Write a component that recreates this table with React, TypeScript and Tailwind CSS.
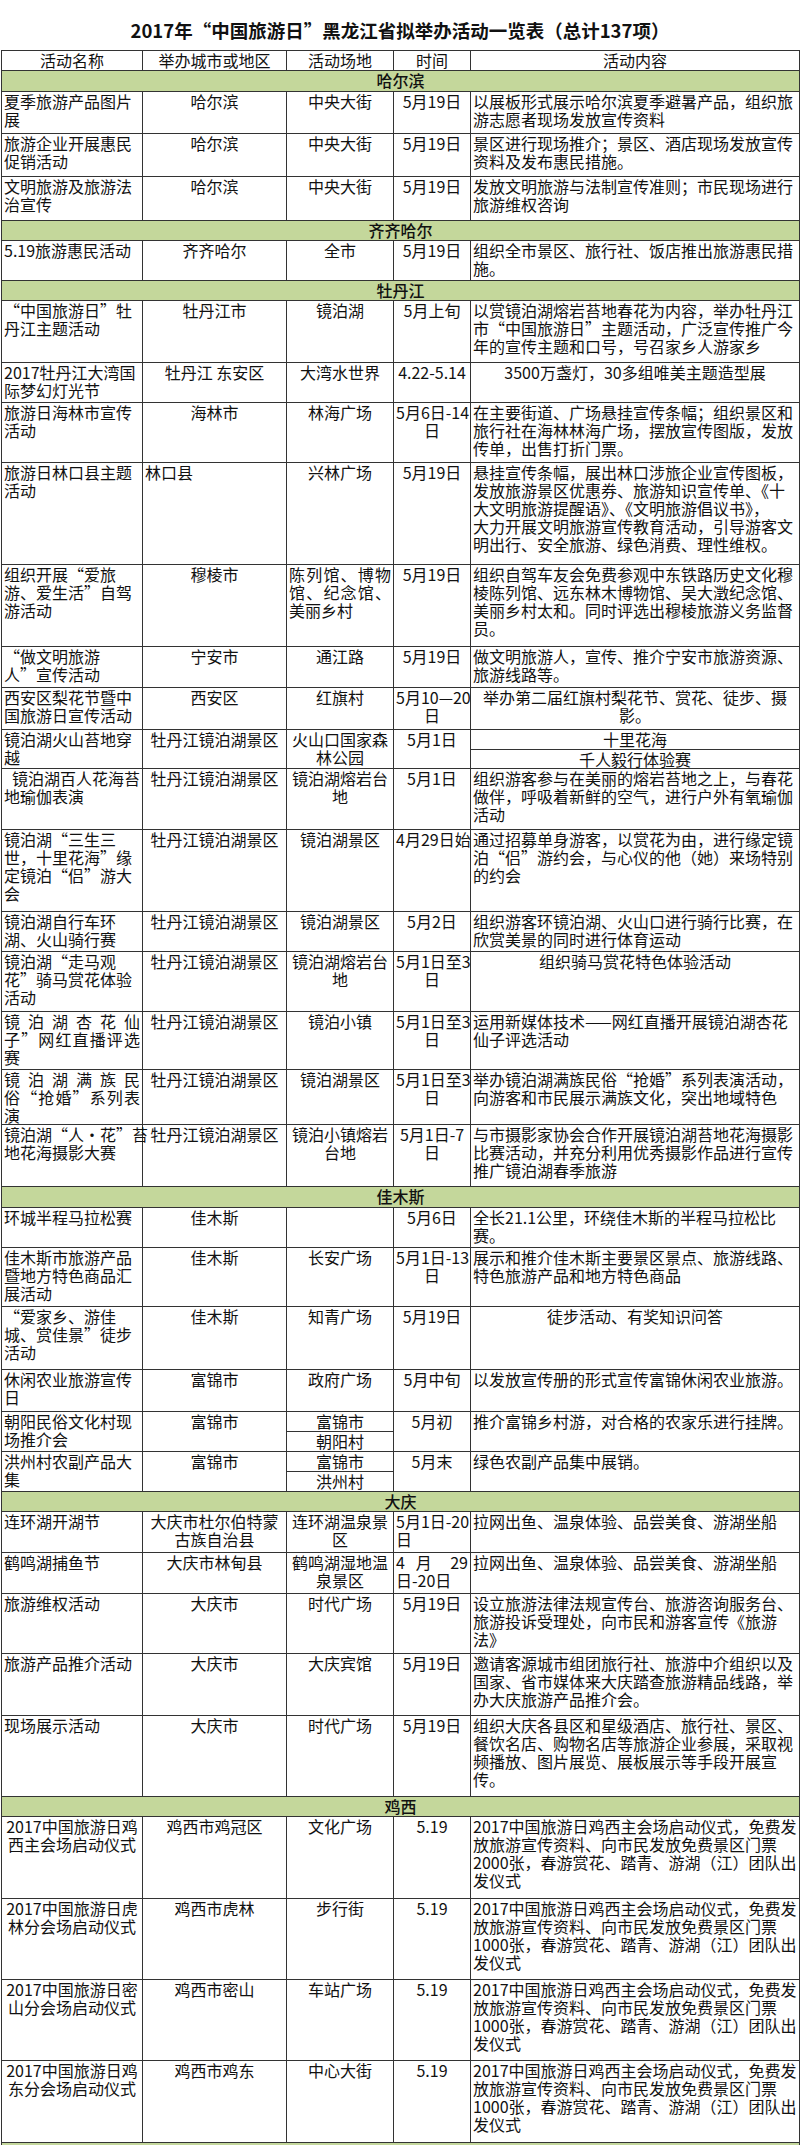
import React from 'react'

type Align = 'l' | 'c'
type CellSpec = string | { t: string; a?: Align; rs?: number }
type Row = { s: string; h: string } | { h: string; c: CellSpec[] }

// column default alignment: 名称 / 城市 / 场地 / 时间 / 内容
const defAlign: Align[] = ['l', 'c', 'c', 'c', 'l']

const rows: Row[] = [
  { s: '哈尔滨', h: 'h-[21px]' },
  { h: 'h-[42px]', c: ['夏季旅游产品图片|展', '哈尔滨', '中央大街', '5月19日', '以展板形式展示哈尔滨夏季避暑产品，组织旅|游志愿者现场发放宣传资料'] },
  { h: 'h-[43px]', c: ['旅游企业开展惠民|促销活动', '哈尔滨', '中央大街', '5月19日', '景区进行现场推介；景区、酒店现场发放宣传|资料及发布惠民措施。'] },
  { h: 'h-[44px]', c: ['文明旅游及旅游法|治宣传', '哈尔滨', '中央大街', '5月19日', '发放文明旅游与法制宣传准则；市民现场进行|旅游维权咨询'] },
  { s: '齐齐哈尔', h: 'h-[20px]' },
  { h: 'h-[40px]', c: ['5.19旅游惠民活动', '齐齐哈尔', '全市', '5月19日', '组织全市景区、旅行社、饭店推出旅游惠民措|施。'] },
  { s: '牡丹江', h: 'h-[20px]' },
  { h: 'h-[62px]', c: ['“中国旅游日”牡|丹江主题活动', '牡丹江市', '镜泊湖', '5月上旬', '以赏镜泊湖熔岩苔地春花为内容，举办牡丹江|市“中国旅游日”主题活动，广泛宣传推广今|年的宣传主题和口号，号召家乡人游家乡'] },
  { h: 'h-[40px]', c: ['2017牡丹江大湾国|际梦幻灯光节', '牡丹江 东安区', '大湾水世界', '4.22-5.14', { t: '3500万盏灯，30多组唯美主题造型展', a: 'c' }] },
  { h: 'h-[60px]', c: ['旅游日海林市宣传|活动', '海林市', '林海广场', '5月6日-14|日', '在主要街道、广场悬挂宣传条幅；组织景区和|旅行社在海林林海广场，摆放宣传图版，发放|传单，出售打折门票。'] },
  { h: 'h-[102px]', c: ['旅游日林口县主题|活动', { t: '林口县', a: 'l' }, '兴林广场', '5月19日', '悬挂宣传条幅，展出林口涉旅企业宣传图板，|发放旅游景区优惠券、旅游知识宣传单、《十|大文明旅游提醒语》、《文明旅游倡议书》，|大力开展文明旅游宣传教育活动，引导游客文|明出行、安全旅游、绿色消费、理性维权。'] },
  { h: 'h-[82px]', c: ['组织开展“爱旅|游、爱生活”自驾|游活动', '穆棱市', { t: '~陈列馆、博物|~馆、纪念馆、|美丽乡村', a: 'l' }, '5月19日', '组织自驾车友会免费参观中东铁路历史文化穆|棱陈列馆、远东林木博物馆、吴大澂纪念馆、|美丽乡村太和。同时评选出穆棱旅游义务监督|员。'] },
  { h: 'h-[41px]', c: ['“做文明旅游|人”宣传活动', '宁安市', '通江路', '5月19日', '做文明旅游人，宣传、推介宁安市旅游资源、|旅游线路等。'] },
  { h: 'h-[42px]', c: ['西安区梨花节暨中|国旅游日宣传活动', '西安区', '红旗村', '5月10—20|日', { t: '举办第二届红旗村梨花节、赏花、徒步、摄|影。', a: 'c' }] },
  { h: 'h-[20px]', c: [{ t: '镜泊湖火山苔地穿|越', rs: 2 }, { t: '牡丹江镜泊湖景区', rs: 2 }, { t: '火山口国家森|林公园', rs: 2 }, { t: '5月1日', rs: 2 }, { t: '十里花海', a: 'c' }] },
  { h: 'h-[19px]', c: [{ t: '千人毅行体验赛', a: 'c' }] },
  { h: 'h-[61px]', c: ['^镜泊湖百人花海苔|地瑜伽表演', '牡丹江镜泊湖景区', '镜泊湖熔岩台|地', '5月1日', '组织游客参与在美丽的熔岩苔地之上，与春花|做伴，呼吸着新鲜的空气，进行户外有氧瑜伽|活动'] },
  { h: 'h-[82px]', c: ['镜泊湖“三生三|世，十里花海”缘|定镜泊“侣”游大|会', '牡丹江镜泊湖景区', '镜泊湖景区', '4月29日始', '通过招募单身游客，以赏花为由，进行缘定镜|泊“侣”游约会，与心仪的他（她）来场特别|的约会'] },
  { h: 'h-[40px]', c: ['镜泊湖自行车环|湖、火山骑行赛', '牡丹江镜泊湖景区', '镜泊湖景区', '5月2日', '组织游客环镜泊湖、火山口进行骑行比赛，在|欣赏美景的同时进行体育运动'] },
  { h: 'h-[60px]', c: ['镜泊湖“走马观|花”骑马赏花体验|活动', '牡丹江镜泊湖景区', '镜泊湖熔岩台|地', '5月1日至3|日', { t: '组织骑马赏花特色体验活动', a: 'c' }] },
  { h: 'h-[58px]', c: ['~镜泊湖杏花仙|~子”网红直播评选|赛', '牡丹江镜泊湖景区', '镜泊小镇', '5月1日至3|日', '运用新媒体技术——网红直播开展镜泊湖杏花|仙子评选活动'] },
  { h: 'h-[55px]', c: ['~镜泊湖满族民|~俗“抢婚”系列表|演', '牡丹江镜泊湖景区', '镜泊湖景区', '5月1日至3|日', '举办镜泊湖满族民俗“抢婚”系列表演活动，|向游客和市民展示满族文化，突出地域特色'] },
  { h: 'h-[62px]', c: ['镜泊湖“人•花”苔|地花海摄影大赛', '牡丹江镜泊湖景区', '镜泊小镇熔岩|台地', '5月1日-7|日', '与市摄影家协会合作开展镜泊湖苔地花海摄影|比赛活动，并充分利用优秀摄影作品进行宣传|推广镜泊湖春季旅游'] },
  { s: '佳木斯', h: 'h-[21px]' },
  { h: 'h-[40px]', c: ['环城半程马拉松赛', '佳木斯', '', '5月6日', '全长21.1公里，环绕佳木斯的半程马拉松比|赛。'] },
  { h: 'h-[59px]', c: ['佳木斯市旅游产品|暨地方特色商品汇|展活动', '佳木斯', '长安广场', '5月1日-13|日', '展示和推介佳木斯主要景区景点、旅游线路、|特色旅游产品和地方特色商品'] },
  { h: 'h-[63px]', c: ['“爱家乡、游佳|城、赏佳景”徒步|活动', '佳木斯', '知青广场', '5月19日', { t: '徒步活动、有奖知识问答', a: 'c' }] },
  { h: 'h-[42px]', c: ['休闲农业旅游宣传|日', '富锦市', '政府广场', '5月中旬', '以发放宣传册的形式宣传富锦休闲农业旅游。'] },
  { h: 'h-[20px]', c: [{ t: '朝阳民俗文化村现|场推介会', rs: 2 }, { t: '富锦市', rs: 2 }, '富锦市', { t: '5月初', rs: 2 }, { t: '推介富锦乡村游，对合格的农家乐进行挂牌。', rs: 2 }] },
  { h: 'h-[20px]', c: [{ t: '朝阳村', a: 'c' }] },
  { h: 'h-[20px]', c: [{ t: '洪州村农副产品大|集', rs: 2 }, { t: '富锦市', rs: 2 }, '富锦市', { t: '5月末', rs: 2 }, { t: '绿色农副产品集中展销。', rs: 2 }] },
  { h: 'h-[20px]', c: [{ t: '洪州村', a: 'c' }] },
  { s: '大庆', h: 'h-[20px]' },
  { h: 'h-[41px]', c: ['连环湖开湖节', '大庆市杜尔伯特蒙|古族自治县', '连环湖温泉景|区', { t: '5月1日-20|日', a: 'l' }, '拉网出鱼、温泉体验、品尝美食、游湖坐船'] },
  { h: 'h-[41px]', c: ['鹤鸣湖捕鱼节', '大庆市林甸县', '鹤鸣湖湿地温|泉景区', { t: '~4 月 29|日-20日', a: 'l' }, '拉网出鱼、温泉体验、品尝美食、游湖坐船'] },
  { h: 'h-[60px]', c: ['旅游维权活动', '大庆市', '时代广场', '5月19日', '设立旅游法律法规宣传台、旅游咨询服务台、|旅游投诉受理处，向市民和游客宣传《旅游|法》'] },
  { h: 'h-[62px]', c: ['旅游产品推介活动', '大庆市', '大庆宾馆', '5月19日', '邀请客源城市组团旅行社、旅游中介组织以及|国家、省市媒体来大庆踏查旅游精品线路，举|办大庆旅游产品推介会。'] },
  { h: 'h-[81px]', c: ['现场展示活动', '大庆市', '时代广场', '5月19日', '组织大庆各县区和星级酒店、旅行社、景区、|餐饮名店、购物名店等旅游企业参展，采取视|频播放、图片展览、展板展示等手段开展宣|传。'] },
  { s: '鸡西', h: 'h-[20px]' },
  { h: 'h-[82px]', c: [{ t: '2017中国旅游日鸡|西主会场启动仪式', a: 'c' }, '鸡西市鸡冠区', '文化广场', '5.19', '2017中国旅游日鸡西主会场启动仪式，免费发|放旅游宣传资料、向市民发放免费景区门票|2000张，春游赏花、踏青、游湖（江）团队出|发仪式'] },
  { h: 'h-[81px]', c: [{ t: '2017中国旅游日虎|林分会场启动仪式', a: 'c' }, '鸡西市虎林', '步行街', '5.19', '2017中国旅游日鸡西主会场启动仪式，免费发|放旅游宣传资料、向市民发放免费景区门票|1000张，春游赏花、踏青、游湖（江）团队出|发仪式'] },
  { h: 'h-[81px]', c: [{ t: '2017中国旅游日密|山分会场启动仪式', a: 'c' }, '鸡西市密山', '车站广场', '5.19', '2017中国旅游日鸡西主会场启动仪式，免费发|放旅游宣传资料、向市民发放免费景区门票|1000张，春游赏花、踏青、游湖（江）团队出|发仪式'] },
  { h: 'h-[82px]', c: [{ t: '2017中国旅游日鸡|东分会场启动仪式', a: 'c' }, '鸡西市鸡东', '中心大街', '5.19', '2017中国旅游日鸡西主会场启动仪式，免费发|放旅游宣传资料、向市民发放免费景区门票|1000张，春游赏花、踏青、游湖（江）团队出|发仪式'] },
  { s: '', h: 'h-[20px]' },
]

const headers = ['活动名称', '举办城市或地区', '活动场地', '时间', '活动内容']

const cellCls = 'border border-[#333] align-top px-[2px] py-0 whitespace-nowrap'

// "~" = spread across the cell, "^" = indented first line
const Line = ({ text, align }: { text: string; align: Align }) => {
  if (text.startsWith('~')) {
    return <div className="text-justify [text-align-last:justify]">{text.slice(1)}</div>
  }
  if (text.startsWith('^')) {
    return <div className="pl-[8px] text-left">{text.slice(1)}</div>
  }
  return <div className={align === 'c' ? 'text-center' : 'text-left'}>{text}</div>
}

const Cell = ({ spec, col }: { spec: CellSpec; col: number }) => {
  const s = typeof spec === 'string' ? { t: spec } : spec
  const align = s.a ?? defAlign[col] ?? 'l'
  return (
    <td rowSpan={s.rs} className={cellCls}>
      {s.t
        ? s.t.split('|').map((l, i) => <Line key={i} text={l} align={align} />)
        : null}
    </td>
  )
}

export default function App() {
  return (
    <div className="w-[800px] bg-white text-[#111] font-['Noto_Sans_CJK_SC','Noto_Sans',sans-serif] text-[16px] leading-[18px]">
      <h1 className="h-[50px] pt-[20px] text-center text-[18.5px] font-bold leading-[20px]">
        2017年“中国旅游日”黑龙江省拟举办活动一览表（总计137项）
      </h1>
      <table className="ml-[1px] w-[798px] table-fixed border-collapse">
        <colgroup>
          <col className="w-[141px]" />
          <col className="w-[144px]" />
          <col className="w-[107px]" />
          <col className="w-[77px]" />
          <col className="w-[329px]" />
        </colgroup>
        <tbody>
          <tr className="h-[20px]">
            {headers.map((h) => (
              <td key={h} className={cellCls + ' text-center'}>
                {h}
              </td>
            ))}
          </tr>
          {rows.map((r, i) =>
            's' in r ? (
              <tr key={i} className={r.h}>
                <td colSpan={5} className={cellCls + ' bg-[#c4d79b] text-center font-medium'}>
                  {r.s}
                </td>
              </tr>
            ) : (
              <tr key={i} className={r.h}>
                {r.c.map((c, j) => (
                  <Cell key={j} spec={c} col={r.c.length === 5 ? j : -1} />
                ))}
              </tr>
            ),
          )}
        </tbody>
      </table>
    </div>
  )
}
